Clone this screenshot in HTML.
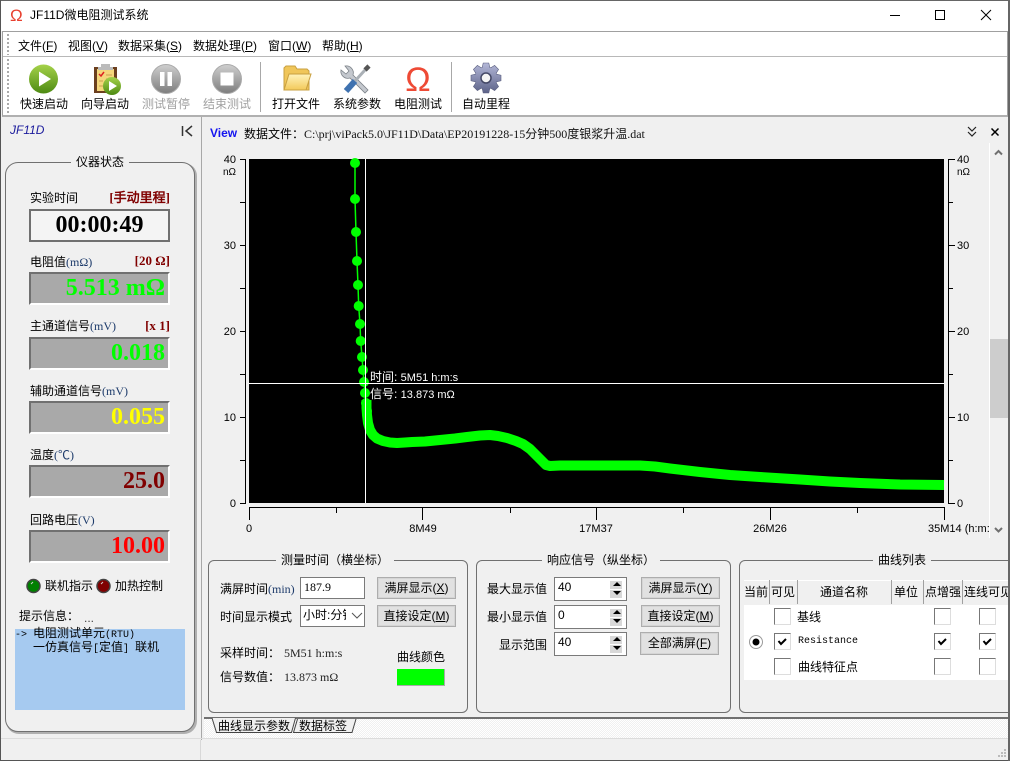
<!DOCTYPE html>
<html><head><meta charset="utf-8"><style>
html,body{margin:0;padding:0;width:1010px;height:761px;overflow:hidden;background:#f0f0f0}
body{position:relative;font:12px/16px "Liberation Sans","WenQuanYi Zen Hei","Noto Sans CJK SC",sans-serif;color:#000}
.t{position:absolute;white-space:nowrap;line-height:16px}
.c{transform:translateX(-50%)}
.r{transform:translateX(-100%)}
.s{font-family:"Liberation Serif","WenQuanYi Zen Hei","Noto Sans CJK SC",serif}
.b{position:absolute;box-sizing:border-box}
.lcd{position:absolute;left:29px;width:141px;height:33px;box-sizing:border-box;background:#a9a9a9;border:2px solid #707070;border-right-color:#fff;border-bottom-color:#fff;outline:0;font:bold 24px/29px "Liberation Serif",serif;text-align:right;padding-right:3px;white-space:nowrap}
.red{font:bold 13px/16px "Liberation Serif","WenQuanYi Zen Hei",serif;color:#800000}
.btn{position:absolute;width:79px;height:22px;box-sizing:border-box;background:#e1e1e1;border:1px solid #adadad;box-shadow:inset 0 0 0 1px #d5d5d5;text-align:center;line-height:20px;white-space:nowrap}
.grp{position:absolute;box-sizing:border-box;border:1px solid #707070;border-radius:6px}
.ttl{position:absolute;background:#f0f0f0;white-space:nowrap;line-height:16px;padding:0 5px;transform:translateX(-50%)}
.inp{position:absolute;box-sizing:border-box;background:#fff;border:1px solid #7a7a7a;line-height:18px;padding-left:3px;white-space:nowrap;overflow:hidden}
.spin{position:absolute;left:55px;width:12px;height:8px;background:#d8d8d8;border:0}
.ck{position:absolute;width:17px;height:17px;box-sizing:border-box;background:#fff;border:1px solid;border-color:#777 #ddd #ddd #777}
.hs{position:absolute;top:580px;width:1px;height:24px;background:#a0a0a0}
.mono{font-family:"Liberation Mono","WenQuanYi Zen Hei",monospace;font-size:10px}
.z{font-size:12px}
</style></head><body>

<!-- title bar -->
<div class="b" style="left:0;top:0;width:1010px;height:31px;background:#fff"></div>
<div class="b" style="left:0;top:0;width:1010px;height:1px;background:#666"></div>
<div class="t" style="left:10px;top:7px;font-size:17px;line-height:17px;color:#e8402f">Ω</div>
<div class="t" style="left:30px;top:7px">JF11D微电阻测试系统</div>
<svg class="b" style="left:880px;top:5px" width="120" height="20" fill="none" stroke="#000"><path d="M10 10.500h10M55.500 5.500h9v9h-9zM101 5l10 10M111 5l-10 10"/></svg>

<!-- menu and toolbar -->
<div class="b" style="left:2px;top:31px;width:1006px;height:86px;background:#fff;border:1px solid #a0a0a0;border-bottom:2px solid #b0b0b0"></div>
<div class="b" style="left:3px;top:56px;width:1004px;height:1px;background:#b8b8b8"></div>
<div class="b" style="left:7px;top:34px;width:2px;height:21px;background:repeating-linear-gradient(#aaa 0 2px,transparent 2px 4px)"></div>
<div class="b" style="left:7px;top:59px;width:2px;height:55px;background:repeating-linear-gradient(#aaa 0 2px,transparent 2px 4px)"></div>
<div class="t" style="left:18px;top:38px">文件(<u>F</u>)</div>
<div class="t" style="left:68px;top:38px">视图(<u>V</u>)</div>
<div class="t" style="left:118px;top:38px">数据采集(<u>S</u>)</div>
<div class="t" style="left:193px;top:38px">数据处理(<u>P</u>)</div>
<div class="t" style="left:268px;top:38px">窗口(<u>W</u>)</div>
<div class="t" style="left:322px;top:38px">帮助(<u>H</u>)</div>

<div class="b" style="left:260px;top:62px;width:1px;height:50px;background:#a8a8a8"></div>
<div class="b" style="left:451px;top:62px;width:1px;height:50px;background:#a8a8a8"></div>

<svg class="b" style="left:0;top:57px" width="520" height="44">
<defs>
<linearGradient id="g1" x1="0" y1="0" x2="0" y2="1"><stop offset="0" stop-color="#a5d24a"/><stop offset="1" stop-color="#4d8a12"/></linearGradient>
<linearGradient id="g2" x1="0" y1="0" x2="0" y2="1"><stop offset="0" stop-color="#cfcfcf"/><stop offset="1" stop-color="#7d7d7d"/></linearGradient>
<linearGradient id="g3" x1="0" y1="0" x2="0" y2="1"><stop offset="0" stop-color="#fff3bb"/><stop offset="1" stop-color="#f3c95a"/></linearGradient>
<linearGradient id="g4" x1="0" y1="0" x2="0" y2="1"><stop offset="0" stop-color="#b4b8d8"/><stop offset="1" stop-color="#5c6288"/></linearGradient>
</defs>
<circle cx="43.500" cy="22" r="14.500" fill="url(#g1)"/><path d="M39 14.500v15l12-7.500z" fill="#fff"/>
<path d="M94 10h23v26h-23z" fill="#6b3f1f"/><path d="M97 12h17v22h-17z" fill="#f5d77c"/><path d="M101 7h9v3h3v3h-15v-3h3z" fill="#bbb"/>
<path d="M99 17l2 2 3-4" stroke="#d22" stroke-width="1.500" fill="none"/><path d="M106 18h6M106 22h6M99 24h4M99 29h4" stroke="#c9a050"/>
<circle cx="112" cy="29" r="9" fill="url(#g1)"/><path d="M109 24v10l8-5z" fill="#fff"/>
<circle cx="166" cy="22" r="14.500" fill="url(#g2)" stroke="#aaa"/><path d="M160 15h4.500v14h-4.500zM167.500 15h4.500v14h-4.500z" fill="#fff"/>
<circle cx="227" cy="22" r="14.500" fill="url(#g2)" stroke="#aaa"/><path d="M220.500 15.500h13v13h-13z" fill="#fff"/>
<path d="M284 33v-22l2-2h9l2 3h10l2 2v19z" fill="#f0c65a" stroke="#c9a040"/><path d="M284 33l5-16h22l-5 16z" fill="url(#g3)" stroke="#c9a040"/>
<path d="M345 9a7 7 0 0 1 8 9l15 15-3 3-15-15a7 7 0 0 1-9-8l5 4 3-3z" fill="#c4c8ce" stroke="#7c8288" stroke-width=".8"/>
<path d="M346 34l9-10" stroke="#3f72b0" stroke-width="6"/><path d="M355 24l10-11" stroke="#aab0b6" stroke-width="3"/><path d="M365 13l4-4" stroke="#555" stroke-width="4.500"/>
<g transform="translate(486 21)"><polygon points="-3.800,-10.600 -2.800,-15 2.800,-15 3.800,-10.600 4.800,-10.200 8.600,-12.600 12.600,-8.600 10.200,-4.800 10.600,-3.800 15,-2.800 15,2.800 10.600,3.800 10.200,4.800 12.600,8.600 8.600,12.600 4.800,10.200 3.800,10.600 2.800,15 -2.800,15 -3.800,10.600 -4.800,10.200 -8.600,12.600 -12.600,8.600 -10.200,4.800 -10.600,3.800 -15,2.800 -15,-2.800 -10.600,-3.800 -10.200,-4.800 -12.600,-8.600 -8.600,-12.600 -4.800,-10.200" fill="url(#g4)" stroke="#5a5f80" stroke-width=".6"/><circle r="5" fill="#f4f4f4" stroke="#444866" stroke-width="1.500"/></g>
</svg>
<div class="t c" style="left:418px;top:63px;font-size:34px;line-height:34px;color:#ee4a35">Ω</div>

<div class="t c" style="left:44px;top:96px">快速启动</div>
<div class="t c" style="left:105px;top:96px">向导启动</div>
<div class="t c" style="left:166px;top:96px;color:#a0a0a0">测试暂停</div>
<div class="t c" style="left:227px;top:96px;color:#a0a0a0">结束测试</div>
<div class="t c" style="left:296px;top:96px">打开文件</div>
<div class="t c" style="left:357px;top:96px">系统参数</div>
<div class="t c" style="left:418px;top:96px">电阻测试</div>
<div class="t c" style="left:486px;top:96px">自动里程</div>

<!-- left panel -->
<div class="t" style="left:10px;top:122px;font-style:italic;color:#1a1a9c">JF11D</div>
<svg class="b" style="left:180px;top:124px" width="14" height="14" fill="none" stroke="#333" stroke-width="1.500"><path d="M2.500 2v10M12 2l-6 5 6 5"/></svg>
<div class="b" style="left:201px;top:117px;width:1px;height:623px;background:#a8a8a8"></div>

<div class="b" style="left:6px;top:163px;width:191px;height:571px;border-radius:13px;background:#b0b0b0"></div>
<div class="b" style="left:5px;top:162px;width:190px;height:570px;border-radius:13px;border:1px solid #707070;background:#f0f0f0"></div>
<div class="ttl" style="left:100px;top:154px">仪器状态</div>

<div class="t" style="left:30px;top:190px">实验时间</div>
<div class="t r red" style="left:170px;top:190px">[手动里程]</div>
<div class="lcd" style="top:209px;background:#f4f4f4;border-color:#707070;text-align:center;padding:0;color:#000">00:00:49</div>

<div class="t s" style="left:30px;top:254px">电阻值<span style="color:#1c3a6a">(mΩ)</span></div>
<div class="t r red" style="left:170px;top:253px">[20 Ω]</div>
<div class="lcd" style="top:272px;color:#0f0">5.513 mΩ</div>

<div class="t s" style="left:30px;top:318px">主通道信号<span style="color:#1c3a6a">(mV)</span></div>
<div class="t r red" style="left:170px;top:318px">[x 1]</div>
<div class="lcd" style="top:337px;color:#0f0">0.018</div>

<div class="t s" style="left:30px;top:383px">辅助通道信号<span style="color:#1c3a6a">(mV)</span></div>
<div class="lcd" style="top:401px;color:#ff0">0.055</div>

<div class="t s" style="left:30px;top:447px">温度<span style="color:#1c3a6a">(℃)</span></div>
<div class="lcd" style="top:465px;color:#800000">25.0</div>

<div class="t s" style="left:30px;top:512px">回路电压<span style="color:#1c3a6a">(V)</span></div>
<div class="lcd" style="top:530px;color:#f00">10.00</div>

<svg class="b" style="left:25px;top:577px" width="90" height="18"><circle cx="8.500" cy="9" r="6.500" fill="#008000" stroke="#444" stroke-width="1.500"/><path d="M6 7l2-2" stroke="#ccc"/><circle cx="78.500" cy="9" r="6.500" fill="#800000" stroke="#444" stroke-width="1.500"/><path d="M76 7l2-2" stroke="#ccc"/></svg>
<div class="t" style="left:45px;top:578px">联机指示</div>
<div class="t" style="left:115px;top:578px">加热控制</div>
<div class="t" style="left:19px;top:608px">提示信息：</div>
<div class="t" style="left:84px;top:610px;color:#444">...</div>
<div class="b" style="left:15px;top:629px;width:170px;height:81px;background:#a6caf0"></div>
<div class="t mono" style="left:15px;top:626px">-&gt;&nbsp;<span class="z">电阻测试单元</span>(RTU)</div>
<div class="t mono" style="left:33px;top:640px"><span class="z">一仿真信号</span>[<span class="z">定值</span>]&nbsp;<span class="z">联机</span></div>

<!-- right header -->
<div class="t" style="left:210px;top:125px;font-weight:bold;color:#1515f0">View</div>
<div class="t s" style="left:244px;top:126px">数据文件：</div>
<div class="t s" style="left:304px;top:126px;color:#111">C:\prj\viPack5.0\JF11D\Data\EP20191228-15分钟500度银浆升温.dat</div>
<svg class="b" style="left:966px;top:125px" width="36" height="14" fill="none" stroke="#222" stroke-width="1.200"><path d="M2 2l4 4 4-4M2 7l4 4 4-4"/><path d="M25.500 3.500l7 7M32.500 3.500l-7 7" stroke-width="1.500" stroke="#000"/></svg>

<!-- plot -->
<svg class="b" style="left:205px;top:150px" width="785" height="380">
<g transform="translate(-205 -150)">
<rect x="249" y="159" width="695" height="344" fill="#000"/>
<path d="M355 159L355 199L356 232L357 261L358 285L358.700 306L360 324L360.700 341L362 357L363 370L364 382L365 393L366 403" fill="none" stroke="#0f0" stroke-width="1.500"/>
<path d="M366.500 400L366.500 408L367 415L368 423L370 430L373 435L377 438.500L383 441L390 442.500L397 443L405 442.500L412 442L425 441.500L440 440L455 438.500L467 437L480 435.500L490 435L498 436L507 438L516 441L523 444L530 449L535 454L541 460L546 465L550 466L560 465.500L640 465.500L655 466.500L670 468.500L700 472L730 475L760 477L800 479.500L830 481.500L860 483L900 484.500L944 485" fill="none" stroke="#0f0" stroke-width="10" stroke-linejoin="round"/>
<g fill="#0f0"><circle cx="355" cy="163" r="5"/><circle cx="355" cy="199" r="5"/><circle cx="356" cy="232" r="5"/><circle cx="357" cy="261" r="5"/><circle cx="358" cy="285" r="5"/><circle cx="358.700" cy="306" r="5"/><circle cx="360" cy="324" r="5"/><circle cx="360.700" cy="341" r="5"/><circle cx="362" cy="357" r="5"/><circle cx="363" cy="370" r="5"/><circle cx="364" cy="382" r="5"/><circle cx="365" cy="393" r="5"/><circle cx="366" cy="403" r="5"/><circle cx="367" cy="411" r="5"/></g>
<path d="M365.500 159V503M249 383.500H944" stroke="#fff" fill="none"/>
<path d="M245.500 159V503M240 159.500h6M240 202.500h6M240 245.500h6M240 288.500h6M240 331.500h6M240 374.500h6M240 417.500h6M240 460.500h6M240 503.500h6" stroke="#000" fill="none"/>
<path d="M948.500 159V503M948 159.500h7M948 202.500h5M948 245.500h7M948 288.500h5M948 331.500h7M948 374.500h5M948 417.500h7M948 460.500h5M948 503.500h7" stroke="#000" fill="none"/>
<path d="M249 507.500H945M249.500 507v13M336.500 507v6M422.500 507v13M510.500 507v6M596.500 507v13M683.500 507v6M770.500 507v13M857.500 507v6M944.500 507v13" stroke="#000" fill="none"/>
</g></svg>
<div class="t" style="left:370px;top:369px;color:#fff">时间: <span style="font-size:11px">5M51 h:m:s</span></div>
<div class="t" style="left:370px;top:386px;color:#fff">信号: <span style="font-size:11px">13.873 mΩ</span></div>

<div class="t r" style="left:236px;top:152px;font-size:11px">40</div>
<div class="t r" style="left:236px;top:165px;font-size:10px">nΩ</div>
<div class="t r" style="left:236px;top:238px;font-size:11px">30</div>
<div class="t r" style="left:236px;top:324px;font-size:11px">20</div>
<div class="t r" style="left:236px;top:410px;font-size:11px">10</div>
<div class="t r" style="left:236px;top:496px;font-size:11px">0</div>
<div class="t" style="left:957px;top:152px;font-size:11px">40</div>
<div class="t" style="left:957px;top:165px;font-size:10px">nΩ</div>
<div class="t" style="left:957px;top:238px;font-size:11px">30</div>
<div class="t" style="left:957px;top:324px;font-size:11px">20</div>
<div class="t" style="left:957px;top:410px;font-size:11px">10</div>
<div class="t" style="left:957px;top:496px;font-size:11px">0</div>
<div class="t c" style="left:249px;top:521px;font-size:11px">0</div>
<div class="t c" style="left:423px;top:521px;font-size:11px">8M49</div>
<div class="t c" style="left:596px;top:521px;font-size:11px">17M37</div>
<div class="t c" style="left:770px;top:521px;font-size:11px">26M26</div>
<div class="t" style="left:928px;top:521px;font-size:11px;width:61px;overflow:hidden">35M14 (h:m:s)</div>

<!-- scrollbar -->
<div class="b" style="left:989px;top:143px;width:1px;height:395px;background:#fff"></div>
<div class="b" style="left:990px;top:339px;width:18px;height:79px;background:#cdcdcd"></div>
<svg class="b" style="left:993px;top:146px" width="12" height="392" fill="none" stroke="#707070" stroke-width="2"><path d="M2 8.500l3.500-3.500 3.500 3.500M2 382l3.500 3.500 3.500-3.500"/></svg>

<!-- group 1 -->
<div class="grp" style="left:208px;top:560px;width:260px;height:153px"></div>
<div class="ttl" style="left:335px;top:552px">测量时间（横坐标）</div>
<div class="t s" style="left:220px;top:581px">满屏时间<span style="color:#1c3a6a">(min)</span></div>
<div class="inp s" style="left:300px;top:577px;width:65px;height:22px">187.9</div>
<div class="btn" style="left:377px;top:577px">满屏显示(<u>X</u>)</div>
<div class="t" style="left:220px;top:609px">时间显示模式</div>
<div class="inp" style="left:300px;top:605px;width:65px;height:22px;padding-left:2px">小时:分钟</div>
<div class="b" style="left:346px;top:606px;width:18px;height:20px;background:#fff"></div>
<svg class="b" style="left:351px;top:612px" width="12" height="8" fill="none" stroke="#555"><path d="M1 1l5 5 5-5"/></svg>
<div class="btn" style="left:377px;top:605px">直接设定(<u>M</u>)</div>
<div class="t" style="left:220px;top:645px">采样时间：</div>
<div class="t s" style="left:284px;top:645px;color:#222">5M51 h:m:s</div>
<div class="t" style="left:220px;top:669px">信号数值：</div>
<div class="t s" style="left:284px;top:669px;color:#222">13.873 mΩ</div>
<div class="t" style="left:397px;top:649px">曲线颜色</div>
<div class="b" style="left:397px;top:669px;width:48px;height:17px;background:#0f0;border-right:1px solid #aaa;border-bottom:1px solid #aaa"></div>

<!-- group 2 -->
<div class="grp" style="left:476px;top:560px;width:255px;height:153px"></div>
<div class="ttl" style="left:601px;top:552px">响应信号（纵坐标）</div>
<div class="t r" style="left:547px;top:581px">最大显示值</div>
<div class="t r" style="left:547px;top:609px">最小显示值</div>
<div class="t r" style="left:547px;top:637px">显示范围</div>
<div class="inp" style="left:554px;top:577px;width:73px;height:24px">40<div class="spin" style="top:3px"></div><div class="spin" style="top:12px"></div></div>
<div class="inp" style="left:554px;top:605px;width:73px;height:24px">0<div class="spin" style="top:3px"></div><div class="spin" style="top:12px"></div></div>
<div class="inp" style="left:554px;top:632px;width:73px;height:24px">40<div class="spin" style="top:3px"></div><div class="spin" style="top:12px"></div></div>
<svg class="b" style="left:610px;top:578px" width="14" height="76" fill="#000"><path d="M3 8l4-4 4 4zM3 13l4 4 4-4zM3 36l4-4 4 4zM3 41l4 4 4-4zM3 63l4-4 4 4zM3 68l4 4 4-4z"/></svg>
<div class="btn" style="left:641px;top:577px">满屏显示(<u>Y</u>)</div>
<div class="btn" style="left:641px;top:605px">直接设定(<u>M</u>)</div>
<div class="btn" style="left:640px;top:632px;height:23px">全部满屏(<u>F</u>)</div>

<!-- group 3 -->
<div class="b" style="left:739px;top:560px;width:280px;height:153px;border:1px solid #707070;border-radius:6px"></div>
<div class="ttl" style="left:902px;top:552px">曲线列表</div>
<div class="b" style="left:744px;top:580px;width:266px;height:1px;background:#fff"></div>
<div class="hs" style="left:769px"></div><div class="hs" style="left:797px"></div><div class="hs" style="left:891px"></div><div class="hs" style="left:923px"></div><div class="hs" style="left:962px"></div>
<div class="t" style="left:744px;top:584px">当前</div>
<div class="t" style="left:771px;top:584px">可见</div>
<div class="t" style="left:820px;top:584px">通道名称</div>
<div class="t" style="left:894px;top:584px">单位</div>
<div class="t" style="left:925px;top:584px">点增强</div>
<div class="t" style="left:964px;top:584px;width:46px;overflow:hidden">连线可见</div>
<div class="b" style="left:744px;top:605px;width:266px;height:75px;background:#fff"></div>
<div class="ck" style="left:774px;top:608px"></div><div class="ck" style="left:934px;top:608px"></div><div class="ck" style="left:979px;top:608px"></div>
<div class="ck" style="left:774px;top:633px"></div><div class="ck" style="left:934px;top:633px"></div><div class="ck" style="left:979px;top:633px"></div>
<div class="ck" style="left:774px;top:658px"></div><div class="ck" style="left:934px;top:658px"></div><div class="ck" style="left:979px;top:658px"></div>
<svg class="b" style="left:745px;top:633px" width="260" height="18" fill="none" stroke="#000" stroke-width="2"><path d="M33.500 8l2.500 3 5-5M193.500 8l2.500 3 5-5M238.500 8l2.500 3 5-5"/><circle cx="11" cy="9" r="6.500" stroke="#999" stroke-width="1"/><circle cx="11" cy="9" r="3.500" fill="#000" stroke="none"/></svg>
<div class="t" style="left:797px;top:609px">基线</div>
<div class="t mono" style="left:798px;top:634px">Resistance</div>
<div class="t" style="left:798px;top:659px">曲线特征点</div>

<!-- tabs -->
<div class="b" style="left:204px;top:717px;width:804px;height:21px;background:repeating-conic-gradient(#fff 0 25%,#f0f0f0 0 50%) 0 0/2px 2px;border-top:2px solid #707070"></div>
<div class="b" style="left:202px;top:738px;width:806px;height:1px;background:#dcdcdc"></div>
<svg class="b" style="left:205px;top:717px" width="160" height="18" fill="#f0f0f0" stroke="#444"><path d="M7 1l4.500 14.500h75l4.500-14.500z" stroke="none"/><path d="M92.500 2l-4 13.500h58.500l4-13.500" /><path d="M7 1l4.500 14.500h75l4-14.500" fill="none"/></svg>
<div class="t" style="left:218px;top:718px">曲线显示参数</div>
<div class="t" style="left:299px;top:718px">数据标签</div>

<!-- status bar & window edges -->
<div class="b" style="left:0;top:738px;width:202px;height:1px;background:#dcdcdc"></div>
<div class="b" style="left:200px;top:740px;width:1px;height:20px;background:#d8d8d8"></div>
<div class="b" style="left:0;top:760px;width:1010px;height:1px;background:#555"></div>
<div class="b" style="left:0;top:0;width:1px;height:761px;background:#555"></div>
<div class="b" style="left:1008px;top:0;width:2px;height:761px;background:#666"></div>
<svg class="b" style="left:997px;top:748px" width="10" height="10" fill="#bbb"><path d="M7 1h2v2h-2zM4 4h2v2h-2zM7 4h2v2h-2zM1 7h2v2h-2zM4 7h2v2h-2zM7 7h2v2h-2z"/></svg>
</body></html>
